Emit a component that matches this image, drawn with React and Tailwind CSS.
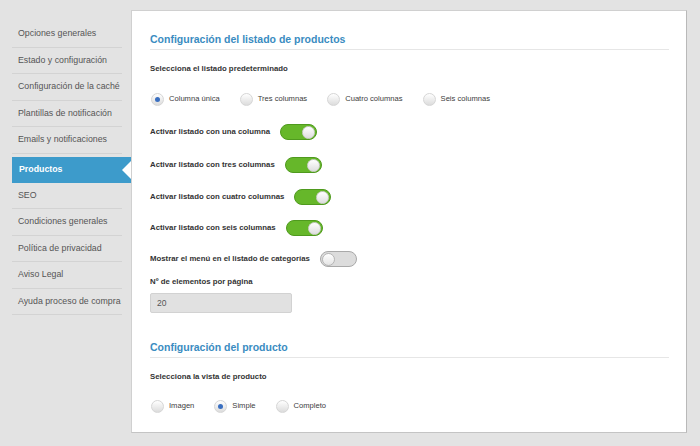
import React from 'react';

const menu = [
    'Opciones generales',
    'Estado y configuración',
    'Configuración de la caché',
    'Plantillas de notificación',
    'Emails y notificaciones',
    'Productos',
    'SEO',
    'Condiciones generales',
    'Política de privacidad',
    'Aviso Legal',
    'Ayuda proceso de compra',
];

const Radio = ({ checked, label }) => (
    <div className="flex items-center gap-[5px]">
        <span className="w-[13px] h-[13px] rounded-full border border-[#d6d6d6] bg-gradient-to-b from-white to-[#dcdcdc] flex items-center justify-center">
            {checked && <span className="w-[5px] h-[5px] rounded-full bg-[#3a6fc0]"></span>}
        </span>
        <span className="text-[7.6px] text-[#3c3c3c] whitespace-nowrap">{label}</span>
    </div>
);

const Toggle = ({ on }) => (
    on ? (
        <span className="ml-[10px] w-[37px] h-[16px] rounded-full bg-[#66b72a] border border-[#4f9a1e] flex items-center justify-end pr-[1px]">
            <span className="w-[13px] h-[13px] rounded-full bg-gradient-to-b from-white to-[#dedede] border border-[#cfcfcf]"></span>
        </span>
    ) : (
        <span className="ml-[10px] w-[37px] h-[16px] rounded-full bg-[#dcdcdc] border border-[#a9a9a9] flex items-center justify-start pl-[1px]">
            <span className="w-[13px] h-[13px] rounded-full bg-gradient-to-b from-white to-[#e4e4e4] border border-[#b5b5b5]"></span>
        </span>
    )
);

const ToggleRow = ({ label, on, mt }) => (
    <div className={`flex items-center h-[16px] ${mt}`}>
        <span className="text-[7.8px] font-bold text-[#333] whitespace-nowrap">{label}</span>
        <Toggle on={on} />
    </div>
);

const App = () => {
    return (
        <div className="w-[700px] h-[446px] bg-[#e3e3e3] flex overflow-hidden" style={{ fontFamily: '"Liberation Sans", Arial, sans-serif' }}>
            {/* Menu lateral */}
            <div className="w-[131px] pl-[12px] pt-[21px] shrink-0">
                {menu.map((item) => item === 'Productos' ? (
                    <div key={item} className="relative h-[26px] mt-[3px] bg-[#3d9bcb] flex items-center pl-[7px]">
                        <span className="text-[8.8px] font-bold text-white">{item}</span>
                        <span className="absolute right-0 top-[4px] w-0 h-0 border-y-[9px] border-y-transparent border-r-[9px] border-r-white"></span>
                    </div>
                ) : (
                    <div key={item} className="w-[110px] h-[26.5px] border-b border-[#d3d3d3] flex items-center pl-[6px]">
                        <span className="text-[8.8px] text-[#555] whitespace-nowrap">{item}</span>
                    </div>
                ))}
            </div>

            {/* Panel principal */}
            <div className="mt-[10px] w-[556px] h-[423px] bg-white border border-[#d0d0d0] border-r-[#b9b9b9] border-b-[#c4c4c4] pl-[18px] pr-[17px]">
                <div className="mt-[21px] h-[16px] flex items-center">
                    <h2 className="text-[10.5px] font-bold text-[#3a8cc1]">Configuración del listado de productos</h2>
                </div>
                <div className="mt-[1px] h-[1px] bg-[#e6e6e6]"></div>

                <div className="mt-[13px] h-[12px] flex items-center text-[7.8px] font-bold text-[#333]">Selecciona el listado predeterminado</div>

                <div className="mt-[17px] h-[14px] flex items-center gap-[20px] pl-[1px]">
                    <Radio checked label="Columna única" />
                    <Radio label="Tres columnas" />
                    <Radio label="Cuatro columnas" />
                    <Radio label="Seis columnas" />
                </div>

                <ToggleRow mt="mt-[18px]" label="Activar listado con una columna" on />
                <ToggleRow mt="mt-[17px]" label="Activar listado con tres columnas" on />
                <ToggleRow mt="mt-[16px]" label="Activar listado con cuatro columnas" on />
                <ToggleRow mt="mt-[15px]" label="Activar listado con seis columnas" on />
                <ToggleRow mt="mt-[15px]" label="Mostrar el menú en el listado de categorías" on={false} />

                <div className="mt-[9px] h-[12px] flex items-center text-[7.8px] font-bold text-[#333]">Nº de elementos por página</div>
                <div className="mt-[5px] w-[142px] h-[20px] bg-[#e1e1e1] border border-[#d2d2d2] rounded-[2px] flex items-center pl-[6px] text-[8.5px] text-[#555]">20</div>

                <div className="mt-[27px] h-[16px] flex items-center">
                    <h2 className="text-[10.5px] font-bold text-[#3a8cc1]">Configuración del producto</h2>
                </div>
                <div className="mt-[1px] h-[1px] bg-[#e6e6e6]"></div>

                <div className="mt-[13px] h-[12px] flex items-center text-[7.8px] font-bold text-[#333]">Selecciona la vista de producto</div>

                <div className="mt-[16px] h-[14px] flex items-center gap-[20px] pl-[1px]">
                    <Radio label="Imagen" />
                    <Radio checked label="Simple" />
                    <Radio label="Completo" />
                </div>
            </div>
        </div>
    );
};

export default App;
